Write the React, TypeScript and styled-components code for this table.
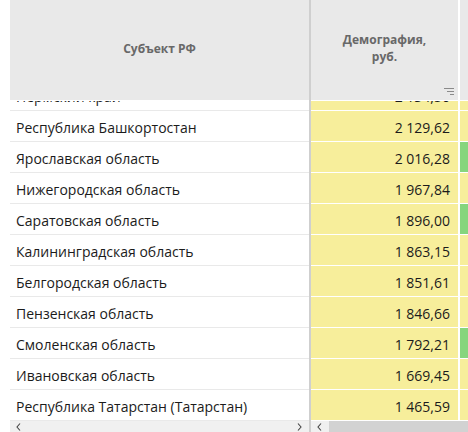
import React, { useLayoutEffect, useRef } from "react";
import styled, { createGlobalStyle } from "styled-components";

const Global = createGlobalStyle`
  html, body { margin: 0; padding: 0; background: #fff; }
  body { font-family: "Open Sans", "Liberation Sans", sans-serif; }
  * { box-sizing: border-box; }
`;

const Frame = styled.div`
  display: flex;
  width: 468px;
  height: 432px;
  overflow: hidden;
  padding-left: 10px;
`;

const Pane = styled.div<{ $fixed?: number }>`
  display: flex;
  flex-direction: column;
  overflow: hidden;
  ${(p) => (p.$fixed ? `width: ${p.$fixed}px; flex: none;` : `flex: 1; min-width: 0;`)}
`;

const Divider = styled.div`
  width: 2px;
  flex: none;
  background: #cfcfcf;
`;

const HeadRow = styled.div`
  display: flex;
  height: 101px;
  flex: none;
  border-bottom: 1px solid #fff;
`;

const HeadCell = styled.div<{ $w?: number; $sep?: boolean }>`
  position: relative;
  ${(p) => (p.$w ? `width: ${p.$w}px; flex: none;` : `flex: 1;`)}
  background: #e9e9e9;
  border-right: ${(p) => (p.$sep ? "2px solid #fff" : "none")};
  display: flex;
  align-items: center;
  justify-content: center;
  text-align: center;
  padding-bottom: 4px;
  font-size: 12px;
  font-weight: 700;
  line-height: 17px;
  color: #686868;
`;

const SortIcon = styled.svg`
  position: absolute;
  right: 4px;
  bottom: 3px;
`;

const Body = styled.div`
  flex: 1;
  overflow: hidden;
`;

const Row = styled.div`
  display: flex;
  height: 31px;
`;

const NameCell = styled.div`
  flex: 1;
  padding: 4px 6px 0;
  font-size: 14px;
  line-height: 26px;
  color: #1b1b1b;
  white-space: nowrap;
  border-bottom: 1px solid #e9e9e9;
`;

const ValueCell = styled.div`
  width: 149px;
  flex: none;
  background: #f7ee9b;
  border-right: 2px solid #fff;
  border-bottom: 1px solid #fff;
  padding: 4px 8px 0 0;
  text-align: right;
  font-size: 14px;
  line-height: 26px;
  color: #1b1b1b;
  white-space: nowrap;
`;

const FlagCell = styled.div<{ $good?: boolean }>`
  width: 100px;
  flex: none;
  background: ${(p) => (p.$good ? "#86d57d" : "#f7ee9b")};
  border-bottom: 1px solid #fff;
`;

const ScrollBar = styled.div`
  height: 11px;
  flex: none;
  display: flex;
  align-items: center;
  background: #f0f0f0;
`;

const Arrow = styled.svg`
  flex: none;
  margin: 0 7px 0 6px;
`;

const Spacer = styled.div`
  flex: 1;
`;

const Thumb = styled.div`
  flex: 1;
  align-self: stretch;
  background: #d2d2d2;
`;

const rows: { name: string; value: string; good?: boolean }[] = [
  { name: "Пермский край", value: "2 134,50" },
  { name: "Республика Башкортостан", value: "2 129,62" },
  { name: "Ярославская область", value: "2 016,28", good: true },
  { name: "Нижегородская область", value: "1 967,84" },
  { name: "Саратовская область", value: "1 896,00", good: true },
  { name: "Калининградская область", value: "1 863,15" },
  { name: "Белгородская область", value: "1 851,61" },
  { name: "Пензенская область", value: "1 846,66" },
  { name: "Смоленская область", value: "1 792,21", good: true },
  { name: "Ивановская область", value: "1 669,45" },
  { name: "Республика Татарстан (Татарстан)", value: "1 465,59" },
  { name: "Кировская область", value: "1 402,17" },
];

const Chevron = ({ dir }: { dir: "left" | "right" }) => (
  <Arrow width="5" height="8" viewBox="0 0 5 8">
    <polyline
      points={dir === "left" ? "4,0.5 1,4 4,7.5" : "1,0.5 4,4 1,7.5"}
      fill="none"
      stroke="#444"
      strokeWidth="1.1"
    />
  </Arrow>
);

export default function App() {
  const leftRef = useRef<HTMLDivElement>(null);
  const rightRef = useRef<HTMLDivElement>(null);

  useLayoutEffect(() => {
    if (leftRef.current) leftRef.current.scrollTop = 21;
    if (rightRef.current) rightRef.current.scrollTop = 21;
  }, []);

  return (
    <>
      <Global />
      <Frame>
        <Pane $fixed={299}>
          <HeadRow>
            <HeadCell>Субъект РФ</HeadCell>
          </HeadRow>
          <Body ref={leftRef}>
            {rows.map((r) => (
              <Row key={r.name}>
                <NameCell>{r.name}</NameCell>
              </Row>
            ))}
          </Body>
          <ScrollBar>
            <Chevron dir="left" />
            <Spacer />
            <Chevron dir="right" />
          </ScrollBar>
        </Pane>
        <Divider />
        <Pane>
          <HeadRow>
            <HeadCell $w={149} $sep>
              Демография,
              <br />
              руб.
              <SortIcon width="10" height="10" viewBox="0 0 10 10">
                <rect x="0" y="1" width="10" height="1" fill="#8a8a8a" />
                <rect x="3" y="4" width="7" height="1" fill="#8a8a8a" />
                <rect x="6" y="7" width="4" height="1" fill="#8a8a8a" />
              </SortIcon>
            </HeadCell>
            <HeadCell $w={100} />
          </HeadRow>
          <Body ref={rightRef}>
            {rows.map((r) => (
              <Row key={r.name}>
                <ValueCell>{r.value}</ValueCell>
                <FlagCell $good={r.good} />
              </Row>
            ))}
          </Body>
          <ScrollBar>
            <Chevron dir="left" />
            <Thumb />
          </ScrollBar>
        </Pane>
      </Frame>
    </>
  );
}
